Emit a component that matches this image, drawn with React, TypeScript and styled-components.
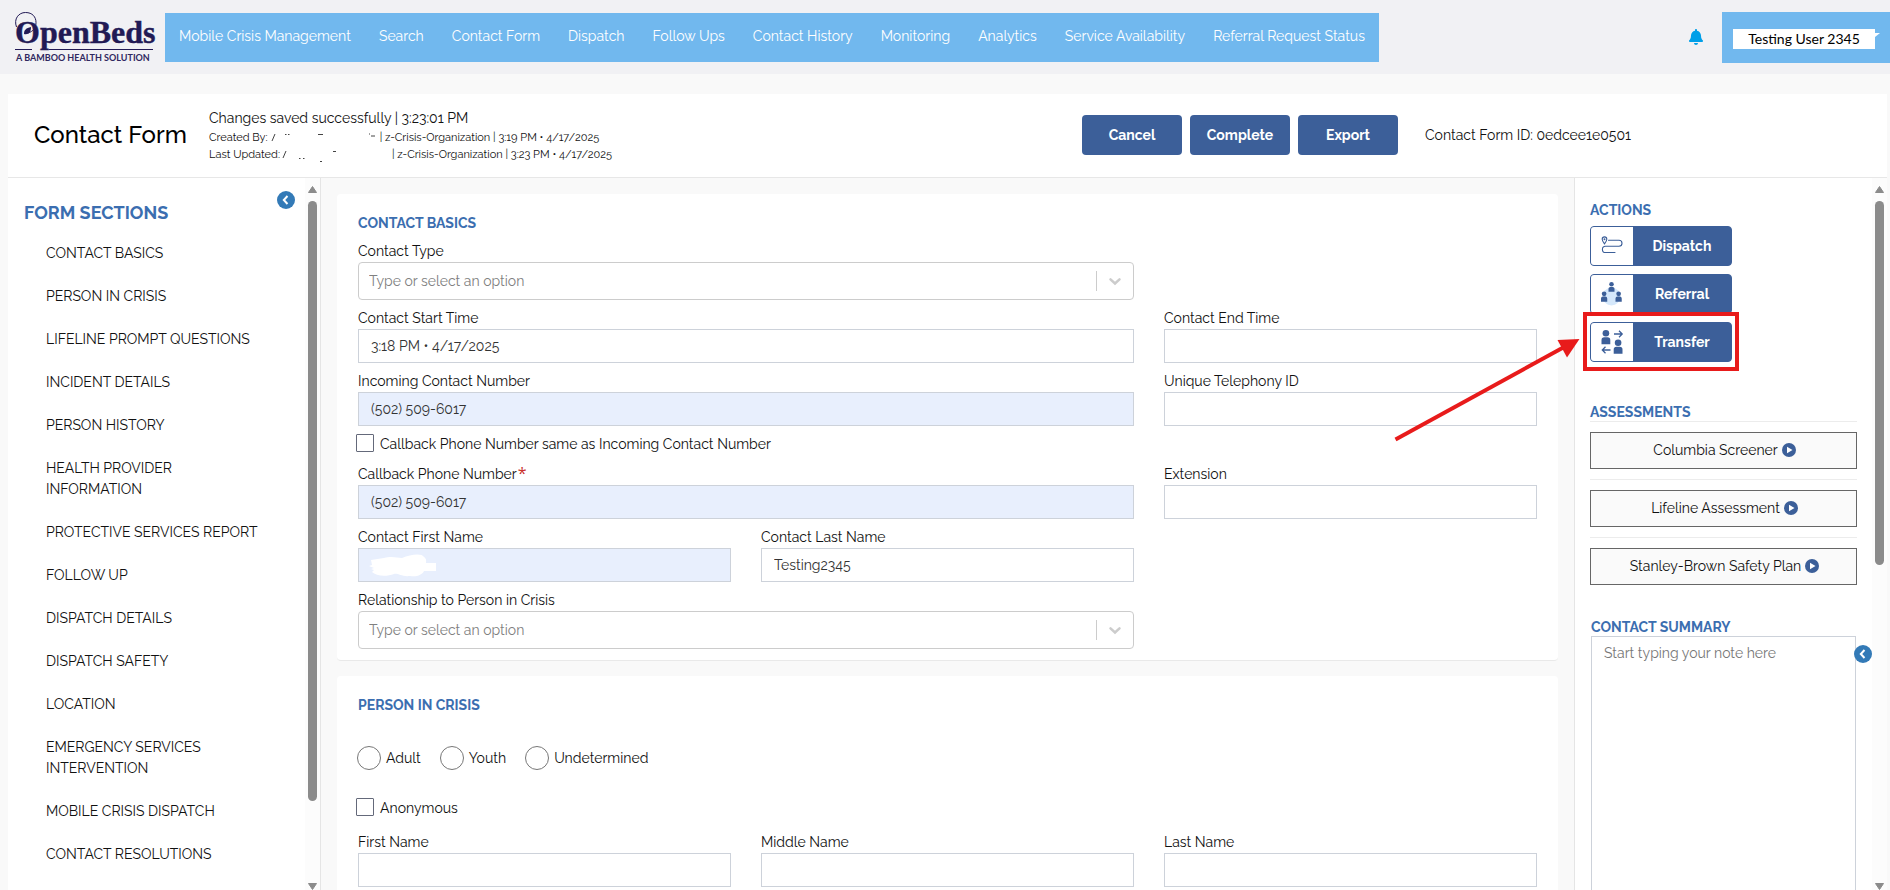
import React from "react";
import styled, { createGlobalStyle } from "styled-components";
import { FaBell } from "react-icons/fa";

const blue = "#3c5f99";
const heading = "#3b6eb0";

const GlobalStyle = createGlobalStyle`
  *, *::before, *::after { box-sizing: border-box; }
  body {
    margin: 0;
    background: #f9f9f9;
    color: #111;
    font-family: Raleway, Lato, "Open Sans", sans-serif;
    font-size: 14px;
    line-height: 20px;
    font-variant-numeric: oldstyle-nums;
  }
  button, input, select, textarea { font: inherit; color: inherit; font-variant-numeric: inherit; }
  h1, h2, p, ul { margin: 0; padding: 0; }
`;

const Page = styled.div`
  display: flex;
  flex-direction: column;
  height: 100vh;
  overflow: hidden;
`;

/* ---------- top navigation ---------- */
const TopBar = styled.header`
  display: flex;
  align-items: center;
  flex: none;
  height: 74px;
  padding-left: 12px;
  background: #f1f1f4;
`;

const Logo = styled.svg`
  flex: none;
  width: 153px;
  height: 56px;
`;

const Nav = styled.nav`
  display: flex;
  flex: 0 1 1214px;
  align-items: center;
  justify-content: space-between;
  height: 49px;
  padding: 0 14px 2px;
  background: #71b8ee;
`;

const NavLink = styled.a`
  color: #fff;
  text-decoration: none;
  white-space: nowrap;
`;

const Account = styled.div`
  display: flex;
  align-items: center;
  gap: 18px;
  margin-left: auto;
`;

const BellButton = styled.button`
  display: flex;
  padding: 0;
  border: 0;
  background: none;
  color: #009fe8;
`;

const UserButton = styled.button`
  display: flex;
  align-items: center;
  width: 168px;
  height: 51px;
  padding: 4px 10px 0 11px;
  border: 0;
  background: #71b8ee;
`;

const UserName = styled.span`
  width: 142px;
  color: #000;
  background: #fff;
  font-family: Lato, sans-serif;
  font-variant-numeric: lining-nums;
  line-height: 20px;
`;

const UserCaret = styled.span`
  margin-bottom: 8px;
  border: 5px solid transparent;
  border-top: 4px solid #fff;
  border-bottom: 0;
  border-left: 0;
`;

/* ---------- form title bar ---------- */
const TitleBar = styled.div`
  display: flex;
  flex: none;
  align-items: center;
  height: 84px;
  margin: 20px 3px 0 8px;
  padding: 0 26px 2px;
  background: #fff;
  border-bottom: 1px solid #e7e7e7;
`;

const Title = styled.h1`
  flex: none;
  width: 175px;
  font-size: 24px;
  font-weight: 500;
  line-height: 32px;
  color: #000;
`;

const SaveStatus = styled.div`
  flex: 1;
  white-space: nowrap;
`;

const StatusMain = styled.p`
  line-height: 22px;
`;

const StatusSmall = styled.p`
  display: flex;
  font-size: 11px;
  line-height: 17px;
`;

const Redacted = styled.svg<{ $width: number }>`
  width: ${(p) => p.$width}px;
  height: 17px;
  flex: none;
`;

const TitleActions = styled.div`
  display: flex;
  gap: 8px;
`;

const PrimaryButton = styled.button`
  width: 100px;
  height: 40px;
  padding: 0;
  border: 0;
  border-radius: 4px;
  background: ${blue};
  color: #fff;
  font-weight: 700;
`;

const FormId = styled.p`
  width: 463px;
  padding-left: 27px;
  white-space: nowrap;
`;

/* ---------- three column body ---------- */
const Body = styled.div`
  display: flex;
  flex: 1;
  min-height: 0;
  margin: 0 3px 0 8px;
`;

const Sidebar = styled.aside`
  display: flex;
  flex: none;
  width: 313px;
  background: #fff;
  border-right: 1px solid #e5e5e5;
`;

const SidebarContent = styled.div`
  position: relative;
  flex: 1;
  min-width: 0;
  overflow: hidden;
  padding: 24px 20px 0 16px;
`;

const SidebarTitle = styled.h2`
  color: ${heading};
  font-size: 18px;
  font-weight: 700;
  line-height: 22px;
  margin-bottom: 19px;
`;

const SectionList = styled.ul`
  display: flex;
  flex-direction: column;
  gap: 22px;
  padding-left: 22px;
  list-style: none;
`;

const SectionLink = styled.a`
  display: block;
  max-width: 220px;
  color: #111;
  text-decoration: none;
  line-height: 21px;
`;

const RoundToggle = styled.button<{ $top: number; $right: number }>`
  position: absolute;
  top: ${(p) => p.$top}px;
  right: ${(p) => p.$right}px;
  display: flex;
  width: 18px;
  height: 18px;
  padding: 0;
  border: 0;
  border-radius: 50%;
  background: #337ab7;
`;

const ScrollTrack = styled.div`
  display: flex;
  flex: none;
  flex-direction: column;
  align-items: center;
  width: 15px;
  padding-top: 8px;
  background: #fcfcfc;
`;

const ScrollArrow = styled.svg`
  flex: none;
  width: 9px;
  height: 7px;
`;

const ScrollRail = styled.div`
  flex: 1;
  width: 9px;
  margin: 8px 0;
`;

const ScrollThumb = styled.div<{ $share: number }>`
  height: ${(p) => p.$share}%;
  border-radius: 5px;
  background: #8b8b8b;
`;

const Main = styled.main`
  flex: 1;
  min-width: 0;
  overflow: hidden;
  padding: 16px 16px 0;
`;

const Card = styled.section`
  margin-bottom: 15px;
  padding: 19px 21px 11px;
  background: #fff;
  border-bottom: 1px solid #e9e9e9;
  border-radius: 4px;
`;

const CardTitle = styled.h2`
  color: ${heading};
  font-size: 14px;
  font-weight: 700;
  line-height: 20px;
`;

const FieldGrid = styled.div`
  display: grid;
  grid-template-columns: repeat(3, minmax(0, 1fr));
  column-gap: 30px;
`;

const FieldBox = styled.div<{ $span: number }>`
  grid-column: span ${(p) => p.$span};
`;

const FieldLabel = styled.label`
  display: block;
  padding: 8px 0 1px;
`;

const Required = styled.span`
  margin-left: 1px;
  color: #c9302c;
  font-family: "Open Sans", sans-serif;
  font-size: 16px;
  line-height: 1;
`;

const InputWrap = styled.div`
  position: relative;
`;

const TextInput = styled.input<{ $filled: boolean }>`
  display: block;
  width: 100%;
  height: 34px;
  padding: 0 12px;
  border: 1px solid #cdd2da;
  border-radius: 0;
  background: ${(p) => (p.$filled ? "#e8effd" : "#fff")};
  color: #333;
`;

const Scribble = styled.svg`
  position: absolute;
  top: 4px;
  left: 9px;
  width: 70px;
  height: 26px;
`;

const Select = styled.select`
  display: block;
  width: 100%;
  height: 38px;
  padding: 0 50px 0 10px;
  border: 1px solid #ccc;
  border-radius: 4px;
  appearance: none;
  background: #fff;
  color: #808080;
`;

const SelectMark = styled.svg`
  position: absolute;
  top: 9px;
  right: 0;
  width: 40px;
  height: 20px;
  pointer-events: none;
`;

const CheckRow = styled.div`
  display: flex;
  align-items: center;
  gap: 6px;
  grid-column: 1 / -1;
  height: 18px;
  margin: 8px 0 4px -2px;
`;

const CheckBox = styled.input`
  appearance: none;
  width: 18px;
  height: 18px;
  margin: 0;
  border: 1px solid #64697a;
  border-radius: 1px;
  background: #fff;
`;

const CheckLabel = styled.label`
  padding-top: 2px;
`;

const RadioRow = styled.div`
  display: flex;
  gap: 19px;
  margin: 31px 0 28px -1px;
`;

const RadioItem = styled.label`
  display: flex;
  align-items: center;
  gap: 5px;
`;

const Radio = styled.input`
  appearance: none;
  width: 24px;
  height: 24px;
  margin: 0;
  border: 1px solid #777;
  border-radius: 50%;
  background: #fff;
`;

const NameGrid = styled(FieldGrid)`
  margin-top: 8px;
`;

/* ---------- right panel ---------- */
const Panel = styled.aside`
  position: relative;
  display: flex;
  flex: none;
  width: 313px;
  background: #fff;
  border-left: 1px solid #e5e5e5;
`;

const PanelContent = styled.div`
  flex: 1;
  padding: 23px 15px 0;
`;

const PanelTitle = styled(CardTitle)`
  line-height: 18px;
`;

const ActionList = styled.div`
  display: flex;
  flex-direction: column;
  gap: 8px;
  margin: 7px 0 41px;
`;

const ActionSlot = styled.div`
  position: relative;
  display: flex;
`;

const ActionButton = styled.button`
  display: flex;
  width: 142px;
  height: 40px;
  padding: 0;
  overflow: hidden;
  border: 1px solid ${blue};
  border-radius: 4px;
  background: ${blue};
  color: #fff;
  font-weight: 700;
  line-height: 38px;
`;

const ActionIcon = styled.svg`
  flex: none;
  width: 42px;
  height: 38px;
  background: #fff;
`;

const ActionText = styled.span`
  flex: 1;
`;

const Pointer = styled.svg`
  position: absolute;
  top: -12px;
  left: -200px;
  width: 352px;
  height: 140px;
  pointer-events: none;
`;

const AssessmentItem = styled.div`
  padding: 10px 0;
  border-top: 1px solid #ececec;
`;

const AssessmentButton = styled.button`
  display: flex;
  align-items: center;
  justify-content: center;
  gap: 4px;
  width: 100%;
  height: 37px;
  padding: 0 0 2px 2px;
  border: 1px solid #666;
  background: #fafafa;
`;

const Summary = styled.div`
  position: relative;
  padding: 23px 1px 0;
`;

const SummaryLabel = styled.label`
  display: block;
  color: ${heading};
  font-weight: 700;
  line-height: 18px;
`;

const Note = styled.textarea`
  display: block;
  width: 100%;
  height: 400px;
  padding: 6px 12px;
  border: 1px solid #cdd2da;
  resize: none;
  &::placeholder { color: #777; opacity: 1; }
`;

const navItems = [
  "Mobile Crisis Management", "Search", "Contact Form", "Dispatch", "Follow Ups",
  "Contact History", "Monitoring", "Analytics", "Service Availability", "Referral Request Status",
];

const sections = [
  "CONTACT BASICS", "PERSON IN CRISIS", "LIFELINE PROMPT QUESTIONS", "INCIDENT DETAILS",
  "PERSON HISTORY", "HEALTH PROVIDER INFORMATION", "PROTECTIVE SERVICES REPORT", "FOLLOW UP",
  "DISPATCH DETAILS", "DISPATCH SAFETY", "LOCATION", "EMERGENCY SERVICES INTERVENTION",
  "MOBILE CRISIS DISPATCH", "CONTACT RESOLUTIONS",
];

function Scrollbar({ share }: { share: number }) {
  return (
    <ScrollTrack aria-hidden>
      <ScrollArrow viewBox="0 0 9 7"><path d="M4.500 0.500 8.500 6.500H0.500Z" fill="#8b8b8b" stroke="#8b8b8b" strokeLinejoin="round" /></ScrollArrow>
      <ScrollRail><ScrollThumb $share={share} /></ScrollRail>
      <ScrollArrow viewBox="0 0 9 7"><path d="M4.500 6.500 0.500 0.500H8.500Z" fill="#8b8b8b" stroke="#8b8b8b" strokeLinejoin="round" /></ScrollArrow>
    </ScrollTrack>
  );
}

function Collapse({ label, top, right }: { label: string; top: number; right: number }) {
  return (
    <RoundToggle aria-label={label} $top={top} $right={right}>
      <svg width="18" height="18" viewBox="0 0 18 18"><path d="M10.500 5 6.800 9l3.700 4" fill="none" stroke="#fff" strokeWidth="2" /></svg>
    </RoundToggle>
  );
}

type FieldProps = {
  id: string; label: string; span?: number; value?: string;
  filled?: boolean; required?: boolean; children?: React.ReactNode;
};

function Field({ id, label, span = 1, value = "", filled = false, required, children }: FieldProps) {
  return (
    <FieldBox $span={span}>
      <FieldLabel htmlFor={id}>{label}{required && <Required>*</Required>}</FieldLabel>
      <InputWrap>
        <TextInput id={id} type="text" defaultValue={value} $filled={filled} />
        {children}
      </InputWrap>
    </FieldBox>
  );
}

function SelectField({ id, label }: { id: string; label: string }) {
  return (
    <>
      <FieldBox $span={2}>
        <FieldLabel htmlFor={id}>{label}</FieldLabel>
        <InputWrap>
          <Select id={id} defaultValue=""><option value="">Type or select an option</option></Select>
          <SelectMark viewBox="0 0 40 20" aria-hidden>
            <path d="M2.500 0V20" stroke="#ccc" />
            <path d="m16.500 8.300 4.500 4.200 4.500-4.200" fill="none" stroke="#ccc" strokeWidth="2.500" strokeLinecap="round" />
          </SelectMark>
        </InputWrap>
      </FieldBox>
      <FieldBox $span={1} />
    </>
  );
}

function Check({ id, label }: { id: string; label: string }) {
  return (
    <CheckRow>
      <CheckBox type="checkbox" id={id} />
      <CheckLabel htmlFor={id}>{label}</CheckLabel>
    </CheckRow>
  );
}

function Person({ x, y, s = 1 }: { x: number; y: number; s?: number }) {
  return (
    <g transform={`translate(${x} ${y}) scale(${s})`} fill={blue}>
      <circle cx="4" cy="3" r="3" />
      <path d="M0 13V9a2.500 2.500 0 0 1 2.500-2.500h3A2.500 2.500 0 0 1 8 9v4Z" />
    </g>
  );
}

function DispatchIcon() {
  return (
    <ActionIcon viewBox="0 0 42 38" aria-hidden>
      <g fill="none" stroke={blue} strokeWidth="1.100" strokeLinecap="round">
        <path d="M13.500 16.800c-1.500-2-2.300-3-2.300-4.600a2.300 2.300 0 0 1 4.600 0c0 1.600-.8 2.600-2.300 4.600Z" />
        <path d="M17.500 13.300H28a3 3 0 0 1 0 6H14.500a3 3 0 0 0 0 6.200H24" />
        <circle cx="13.500" cy="12.200" r=".4" />
      </g>
    </ActionIcon>
  );
}

function ReferralIcon() {
  return (
    <ActionIcon viewBox="0 0 42 38" aria-hidden>
      <circle cx="20.500" cy="21.500" r="9" fill="#d5e8fb" />
      <Person x={17.500} y={7} s={0.750} />
      <Person x={10} y={16.500} s={0.780} />
      <Person x={24.500} y={16.500} s={0.780} />
    </ActionIcon>
  );
}

function TransferIcon() {
  return (
    <ActionIcon viewBox="0 0 42 38" aria-hidden>
      <Person x={10.500} y={7} s={1.100} />
      <Person x={22.700} y={16.500} s={1.100} />
      <g fill="none" stroke={blue} strokeWidth="1.300">
        <path d="M23 11h8M28 7.800l3.200 3.200L28 14.200M19.500 27h-8M14.500 23.800 11.300 27l3.200 3.200" />
      </g>
    </ActionIcon>
  );
}

function PlayIcon() {
  return (
    <svg width="14" height="14" viewBox="0 0 14 14" aria-hidden>
      <circle cx="7" cy="7" r="7" fill={blue} />
      <path d="M5 3.800 10.500 7 5 10.200Z" fill="#fff" />
    </svg>
  );
}

export default function App() {
  return (
    <Page>
      <GlobalStyle />
      <TopBar>
        <Logo viewBox="12 9 153 56" role="img" aria-label="OpenBeds, a Bamboo Health solution">
          <g fill="none" stroke="#221a55" strokeWidth="1">
            <path d="M16.500 27c-3-8 2-14.500 9-14.500S36 17 36 22.500s-3 9-8 10.500" />
            <path d="M15 49.500h17M49 49.500h104" />
          </g>
          <text x="15" y="43" fill="#221a55" stroke="#221a55" strokeWidth="0.400" fontFamily="Liberation Serif, serif" fontWeight="700" fontSize="32">OpenBeds</text>
          <path d="M24 34c0-4 2-6 7-7 0 5-2 8-7 7Z" fill="#221a55" />
          <text x="16" y="61" fill="#2f2860" fontFamily="Lato, sans-serif" fontWeight="700" fontSize="9">A BAMBOO HEALTH SOLUTION</text>
        </Logo>
        <Nav>{navItems.map((n) => <NavLink href="#" key={n}>{n}</NavLink>)}</Nav>
        <Account>
          <BellButton aria-label="Notifications"><FaBell size={16} /></BellButton>
          <UserButton><UserName>Testing User 2345</UserName><UserCaret /></UserButton>
        </Account>
      </TopBar>

      <TitleBar>
        <Title>Contact Form</Title>
        <SaveStatus>
          <StatusMain>Changes saved successfully | 3:23:01 PM</StatusMain>
          <StatusSmall>
            Created By:
            <Redacted $width={112} viewBox="0 0 112 17" aria-hidden>
              <path d="M4 12 7 5M17 5.500h1.500M20 5.500h1.500M50 5.500h5M101 5h1M103 7h4" stroke="#444" fill="none" />
            </Redacted>
            | z-Crisis-Organization | 3:19 PM • 4/17/2025
          </StatusSmall>
          <StatusSmall>
            Last Updated:
            <Redacted $width={112} viewBox="0 0 112 17" aria-hidden>
              <path d="M3 12 6 5M19 12.500h1.500M23 12.500h1.500M40 15.500h2M53 5.500h3" stroke="#444" fill="none" />
            </Redacted>
            | z-Crisis-Organization | 3:23 PM • 4/17/2025
          </StatusSmall>
        </SaveStatus>
        <TitleActions>
          <PrimaryButton>Cancel</PrimaryButton>
          <PrimaryButton>Complete</PrimaryButton>
          <PrimaryButton>Export</PrimaryButton>
        </TitleActions>
        <FormId>Contact Form ID: 0edcee1e0501</FormId>
      </TitleBar>

      <Body>
        <Sidebar>
          <SidebarContent>
            <SidebarTitle>FORM SECTIONS</SidebarTitle>
            <Collapse label="Collapse form sections" top={13} right={10} />
            <SectionList>
              {sections.map((s) => <li key={s}><SectionLink href="#">{s}</SectionLink></li>)}
            </SectionList>
          </SidebarContent>
          <Scrollbar share={89} />
        </Sidebar>

        <Main>
          <Card>
            <CardTitle>CONTACT BASICS</CardTitle>
            <FieldGrid>
              <SelectField id="contact-type" label="Contact Type" />
              <Field id="start" label="Contact Start Time" span={2} value="3:18 PM • 4/17/2025" />
              <Field id="end" label="Contact End Time" />
              <Field id="incoming" label="Incoming Contact Number" span={2} value="(502) 509-6017" filled />
              <Field id="telephony" label="Unique Telephony ID" />
              <Check id="same" label="Callback Phone Number same as Incoming Contact Number" />
              <Field id="callback" label="Callback Phone Number" span={2} value="(502) 509-6017" filled required />
              <Field id="extension" label="Extension" />
              <Field id="contact-first" label="Contact First Name" filled>
                <Scribble viewBox="0 0 70 26" aria-hidden>
                  <path d="M4 8 17 6c8-2 13 0 18 0 9-4 20-5 22-1 3 2 2 5 2 6h10v8H57c-2 4-7 6-14 5-8 1-12-3-16-2-8 3-18 2-22-2l2-2-3-1 3-1-5-2 3-1Z" fill="#fff" />
                </Scribble>
              </Field>
              <Field id="contact-last" label="Contact Last Name" value="Testing2345" />
              <SelectField id="relationship" label="Relationship to Person in Crisis" />
            </FieldGrid>
          </Card>

          <Card>
            <CardTitle>PERSON IN CRISIS</CardTitle>
            <RadioRow>
              {["Adult", "Youth", "Undetermined"].map((r) => (
                <RadioItem key={r}><Radio type="radio" name="age" />{r}</RadioItem>
              ))}
            </RadioRow>
            <Check id="anonymous" label="Anonymous" />
            <NameGrid>
              <Field id="first" label="First Name" />
              <Field id="middle" label="Middle Name" />
              <Field id="last" label="Last Name" />
            </NameGrid>
          </Card>
        </Main>

        <Panel>
          <PanelContent>
            <PanelTitle>ACTIONS</PanelTitle>
            <ActionList>
              <ActionSlot><ActionButton><DispatchIcon /><ActionText>Dispatch</ActionText></ActionButton></ActionSlot>
              <ActionSlot><ActionButton><ReferralIcon /><ActionText>Referral</ActionText></ActionButton></ActionSlot>
              <ActionSlot>
                <ActionButton><TransferIcon /><ActionText>Transfer</ActionText></ActionButton>
                <Pointer viewBox="0 0 352 140" aria-hidden>
                  <rect x="195" y="4" width="152" height="55" fill="none" stroke="#e81b1b" strokeWidth="4" />
                  <path d="M5.500 129.500 176 36" stroke="#e81b1b" strokeWidth="4" />
                  <path d="M189.500 29 167.500 30l9.500 17.500Z" fill="#e81b1b" />
                </Pointer>
              </ActionSlot>
            </ActionList>
            <PanelTitle>ASSESSMENTS</PanelTitle>
            {["Columbia Screener", "Lifeline Assessment", "Stanley-Brown Safety Plan"].map((a) => (
              <AssessmentItem key={a}><AssessmentButton>{a}<PlayIcon /></AssessmentButton></AssessmentItem>
            ))}
            <Summary>
              <SummaryLabel htmlFor="note">CONTACT SUMMARY</SummaryLabel>
              <Note id="note" placeholder="Start typing your note here" />
              <Collapse label="Collapse actions" top={50} right={-15} />
            </Summary>
          </PanelContent>
          <Scrollbar share={54} />
        </Panel>
      </Body>
    </Page>
  );
}
